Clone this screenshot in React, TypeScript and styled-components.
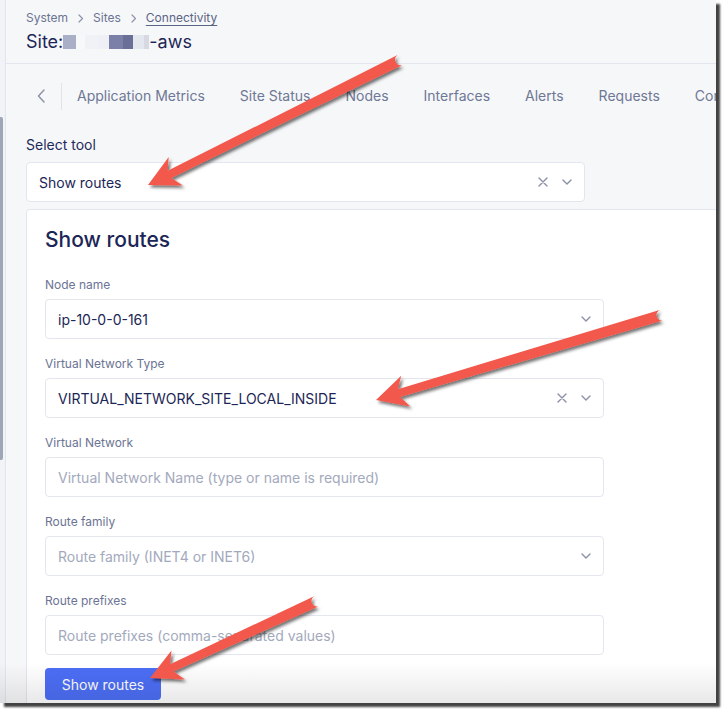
import React from "react";
import styled, { createGlobalStyle } from "styled-components";

const Global = createGlobalStyle`
  html, body { margin: 0; padding: 0; background: #ffffff; }
  body { font-family: Inter, "Noto Sans", sans-serif; -webkit-font-smoothing: antialiased; }
  * { box-sizing: border-box; }
`;

const Page = styled.div`
  width: 726px;
  height: 713px;
  background: #ffffff;
`;

const Window = styled.div`
  position: relative;
  width: 716px;
  height: 703px;
  overflow: hidden;
  display: flex;
  background: #f6f7f9;
  box-shadow: 4px 4px 2px rgba(45, 45, 45, 0.9);
  &::after {
    content: "";
    position: absolute;
    left: 0;
    right: 0;
    bottom: 0;
    height: 40px;
    background: linear-gradient(rgba(0, 0, 0, 0), rgba(0, 0, 0, 0.09));
    pointer-events: none;
  }
`;

const Rail = styled.div`
  width: 6px;
  flex: none;
  background: #f2f3f6;
  border-right: 1px solid #e2e5ec;
  padding-top: 117px;
`;

const Thumb = styled.div`
  width: 3px;
  height: 343px;
  background: #9ea6b8;
  border-radius: 0 2px 2px 0;
`;

const Main = styled.div`
  flex: 1;
  min-width: 0;
  display: flex;
  flex-direction: column;
`;

const Header = styled.header`
  height: 64px;
  padding: 9px 20px;
  border-bottom: 1px solid #e3e6ee;
`;

const Crumbs = styled.nav`
  display: flex;
  align-items: center;
  font-size: 12px;
  line-height: 18px;
  color: #6b7493;
`;

const Crumb = styled.span<{ $link?: boolean }>`
  color: ${(p) => (p.$link ? "#5a6486" : "#6b7493")};
  text-decoration: ${(p) => (p.$link ? "underline" : "none")};
  text-underline-offset: 3px;
  text-decoration-thickness: 1px;
`;

const CrumbSep = styled.svg`
  margin: 0 9px 0 10px;
  flex: none;
`;

const Title = styled.h1`
  margin: 3px 0 0;
  display: flex;
  align-items: center;
  font-size: 18px;
  line-height: 24px;
  font-weight: 400;
  color: #1c2656;
`;

const Blur = styled.span<{ $w: number; $c: string }>`
  display: inline-block;
  width: ${(p) => p.$w}px;
  height: 14px;
  background: ${(p) => p.$c};
`;

const TabsRow = styled.div`
  margin-top: 12px;
  height: 40px;
  display: flex;
  align-items: center;
  padding-left: 20px;
  white-space: nowrap;
`;

const BackBtn = styled.div`
  width: 30px;
  height: 40px;
  display: flex;
  align-items: center;
  justify-content: center;
  flex: none;
`;

const TabDivider = styled.div`
  width: 1px;
  height: 27px;
  background: #e0e3ea;
  margin: 0 15px 0 5px;
  flex: none;
`;

const TabList = styled.div`
  display: flex;
  gap: 35px;
  font-size: 14px;
  line-height: 20px;
  color: #6e7795;
`;

const Section = styled.section`
  padding: 0 20px;
`;

const ToolLabel = styled.div`
  margin-top: 19px;
  font-size: 14px;
  line-height: 20px;
  color: #1f2a5a;
`;

const Box = styled.div<{ $w?: number }>`
  width: ${(p) => p.$w ?? 559}px;
  height: 40px;
  background: #ffffff;
  border: 1px solid #e3e6ee;
  border-radius: 4px;
  padding: 0 12px;
  display: flex;
  align-items: center;
  font-size: 14px;
`;

const BoxText = styled.span<{ $ph?: boolean }>`
  flex: 1;
  color: ${(p) => (p.$ph ? "#a3a9bd" : "#1c2656")};
  white-space: nowrap;
  overflow: hidden;
`;

const Icons = styled.div`
  display: flex;
  align-items: center;
  gap: 14px;
`;

const SelectWrap = styled.div`
  margin-top: 7px;
`;

const Card = styled.div`
  margin-top: 7px;
  width: 720px;
  background: #ffffff;
  border: 1px solid #e3e6ee;
  border-radius: 4px;
  padding: 16px 18px 20px;
`;

const CardTitle = styled.h2`
  margin: 0;
  font-size: 21px;
  line-height: 28px;
  font-weight: 500;
  color: #1c2656;
`;

const Form = styled.div`
  margin-top: 23px;
  display: flex;
  flex-direction: column;
  gap: 17px;
`;

const Field = styled.div`
  display: flex;
  flex-direction: column;
  gap: 6px;
`;

const FieldLabel = styled.label`
  font-size: 12px;
  line-height: 16px;
  color: #6b7493;
`;

const Button = styled.button`
  margin-top: 13px;
  width: 116px;
  height: 32px;
  border: none;
  border-radius: 4px;
  background: #4c6ef5;
  color: #ffffff;
  font-family: inherit;
  font-size: 14px;
  padding: 0;
`;

const Overlay = styled.svg`
  position: absolute;
  left: 0;
  top: 0;
  width: 716px;
  height: 703px;
  pointer-events: none;
  z-index: 2;
`;

const ChevronDown = () => (
  <svg width="10" height="6" viewBox="0 0 10 6">
    <path d="M1 1l4 4 4-4" fill="none" stroke="#8a91a8" strokeWidth="1.4" strokeLinecap="round" strokeLinejoin="round" />
  </svg>
);

const Clear = () => (
  <svg width="10" height="10" viewBox="0 0 10 10">
    <path d="M1 1l8 8M9 1l-8 8" stroke="#8a91a8" strokeWidth="1.4" strokeLinecap="round" />
  </svg>
);

const Sep = () => (
  <CrumbSep width="6" height="9" viewBox="0 0 6 9">
    <path d="M1 1l3.5 3.5L1 8" fill="none" stroke="#8d94ab" strokeWidth="1.2" strokeLinecap="round" strokeLinejoin="round" />
  </CrumbSep>
);

function arrowPath(tx: number, ty: number, px: number, py: number) {
  const dx = px - tx;
  const dy = py - ty;
  const len = Math.hypot(dx, dy);
  const ux = dx / len;
  const uy = dy / len;
  const nx = -uy;
  const ny = ux;
  const L = 31;
  const H = 16;
  const wt = 11;
  const wh = 8;
  const p = (base: [number, number], along: number, side: number) =>
    `${(base[0] + ux * along + nx * side).toFixed(1)} ${(base[1] + uy * along + ny * side).toFixed(1)}`;
  const T: [number, number] = [tx, ty];
  const P: [number, number] = [px, py];
  return [
    `M ${p(T, 0, wt / 2)}`,
    `L ${p(P, -(L - 7), wh / 2)}`,
    `L ${p(P, -L, H)}`,
    `L ${p(P, 0, 0)}`,
    `L ${p(P, -L, -H)}`,
    `L ${p(P, -(L - 7), -wh / 2)}`,
    `L ${p(T, 0, -wt / 2)}`,
    `A ${wt / 2} ${wt / 2} 0 0 1 ${p(T, 0, wt / 2)}`,
    "Z",
  ].join(" ");
}

const arrows = [
  [400, 60, 148, 185],
  [662, 315, 376, 400],
  [317, 601, 150, 678],
];

const tabs = ["Application Metrics", "Site Status", "Nodes", "Interfaces", "Alerts", "Requests", "Connectivity"];

const fields: { label: string; value?: string; ph?: string; clear?: boolean; chevron?: boolean }[] = [
  { label: "Node name", value: "ip-10-0-0-161", chevron: true },
  { label: "Virtual Network Type", value: "VIRTUAL_NETWORK_SITE_LOCAL_INSIDE", clear: true, chevron: true },
  { label: "Virtual Network", ph: "Virtual Network Name (type or name is required)" },
  { label: "Route family", ph: "Route family (INET4 or INET6)", chevron: true },
  { label: "Route prefixes", ph: "Route prefixes (comma-separated values)" },
];

export default function App() {
  return (
    <>
      <Global />
      <Page>
        <Window>
          <Rail>
            <Thumb />
          </Rail>
          <Main>
            <Header>
              <Crumbs>
                <Crumb>System</Crumb>
                <Sep />
                <Crumb>Sites</Crumb>
                <Sep />
                <Crumb $link>Connectivity</Crumb>
              </Crumbs>
              <Title>
                Site:
                <Blur $w={13} $c="#a9afc6" />
                <Blur $w={9} $c="#f7f8fa" />
                <Blur $w={13} $c="#f1f2f6" />
                <Blur $w={11} $c="#eef0f5" />
                <Blur $w={14} $c="#7a80a8" />
                <Blur $w={10} $c="#6a6f98" />
                <Blur $w={11} $c="#e5e7ef" />
                <Blur $w={5} $c="#d6d8e2" />
                -aws
              </Title>
            </Header>
            <TabsRow>
              <BackBtn>
                <svg width="9" height="14" viewBox="0 0 9 14">
                  <path d="M7 1L1.5 7 7 13" fill="none" stroke="#8a91a8" strokeWidth="1.4" strokeLinecap="round" strokeLinejoin="round" />
                </svg>
              </BackBtn>
              <TabDivider />
              <TabList>
                {tabs.map((t) => (
                  <span key={t}>{t}</span>
                ))}
              </TabList>
            </TabsRow>
            <Section>
              <ToolLabel>Select tool</ToolLabel>
              <SelectWrap>
                <Box>
                  <BoxText>Show routes</BoxText>
                  <Icons>
                    <Clear />
                    <ChevronDown />
                  </Icons>
                </Box>
              </SelectWrap>
              <Card>
                <CardTitle>Show routes</CardTitle>
                <Form>
                  {fields.map((f) => (
                    <Field key={f.label}>
                      <FieldLabel>{f.label}</FieldLabel>
                      <Box>
                        <BoxText $ph={!f.value}>{f.value ?? f.ph}</BoxText>
                        <Icons>
                          {f.clear && <Clear />}
                          {f.chevron && <ChevronDown />}
                        </Icons>
                      </Box>
                    </Field>
                  ))}
                </Form>
                <Button>Show routes</Button>
              </Card>
            </Section>
          </Main>
          <Overlay viewBox="0 0 716 703">
            <defs>
              <filter id="shadow" x="-20%" y="-20%" width="140%" height="140%">
                <feDropShadow dx="2" dy="2.5" stdDeviation="1.5" floodColor="#000" floodOpacity="0.55" />
              </filter>
            </defs>
            {arrows.map((a, i) => (
              <path key={i} d={arrowPath(a[0], a[1], a[2], a[3])} fill="#f2584b" filter="url(#shadow)" />
            ))}
          </Overlay>
        </Window>
      </Page>
    </>
  );
}
